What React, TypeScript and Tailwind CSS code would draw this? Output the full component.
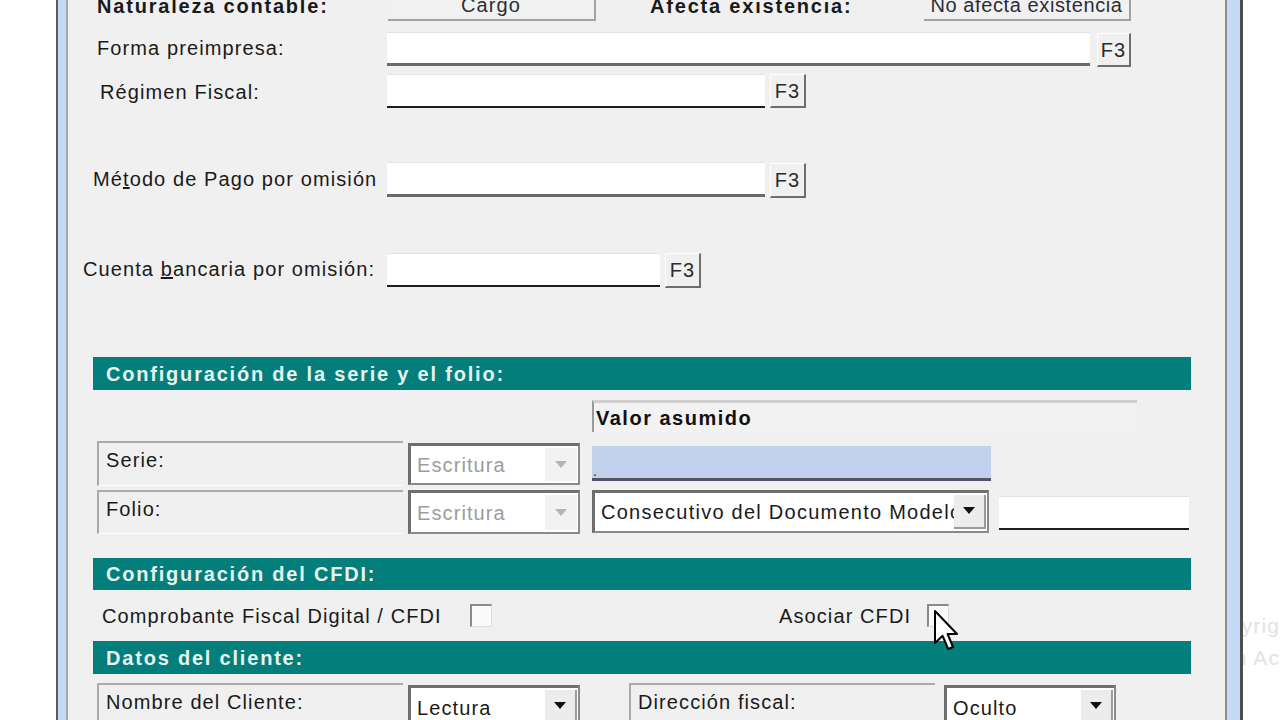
import React from 'react';

// Raised "F3" lookup button next to a text field
function F3Button({ className = '' }: { className?: string }) {
  return (
    <div
      className={`flex items-center justify-center bg-[#f0f0f0] border-t border-l border-white border-r-2 border-b-2 border-r-[#6e6e6e] border-b-[#6e6e6e] text-[20px] text-[#2b2b2b] ${className}`}
    >
      F3
    </div>
  );
}

function TextField({ className = '', dark = false }: { className?: string; dark?: boolean }) {
  return (
    <div
      className={`bg-white border-t border-t-[#e4e4e4] ${dark ? 'border-b-2 border-b-[#1e1e1e]' : 'border-b-[3px] border-b-[#6a6a6a]'} ${className}`}
    />
  );
}

function Arrow({ color }: { color: string }) {
  return (
    <svg width="12" height="8" viewBox="0 0 12 8">
      <path d="M0 0 H12 L6 7 Z" fill={color} />
    </svg>
  );
}

// Combo box; disabled ones show grey text and a pale arrow
function Combo({
  value,
  disabled = false,
  className = '',
}: {
  value: string;
  disabled?: boolean;
  className?: string;
}) {
  return (
    <div
      className={`flex items-stretch bg-white border-2 border-[#8a8a8a] border-t-[3px] border-l-[3px] border-t-[#6f6f6f] border-l-[#6f6f6f] ${className}`}
    >
      <span
        className={`flex-1 flex items-center pl-[6px] overflow-hidden whitespace-nowrap ${disabled ? 'text-[#9c9c9c]' : 'text-[#1a1a1a]'}`}
      >
        {value}
      </span>
      <span
        className={`w-[32px] shrink-0 my-[2px] mr-[1px] flex items-center justify-center ${disabled ? 'bg-[#f2f2f2]' : 'bg-[#ececec] border-r-2 border-b-2 border-r-[#9a9a9a] border-b-[#9a9a9a]'}`}
      >
        <Arrow color={disabled ? '#b5b5b5' : '#111'} />
      </span>
    </div>
  );
}

function LabelBox({ text, className = '' }: { text: string; className?: string }) {
  return (
    <div
      className={`bg-[#f0f0f0] border-t-2 border-l-2 border-t-[#ababab] border-l-[#ababab] border-b border-b-white pl-[7px] pt-[2px] text-[#1a1a1a] ${className}`}
    >
      {text}
    </div>
  );
}

function Header({ title, className = '' }: { title: string; className?: string }) {
  return (
    <div
      className={`ml-[25px] w-[1098px] bg-[#037e7a] flex items-center pl-[13px] font-bold tracking-[1.8px] text-[#e6f2f0] ${className}`}
    >
      {title}
    </div>
  );
}

function CheckBox() {
  return (
    <div className="w-[22px] h-[23px] bg-[#fafafa] border-t-2 border-l-2 border-t-[#8a8a8a] border-l-[#8a8a8a] border-r border-b border-r-[#dcdcdc] border-b-[#dcdcdc]" />
  );
}

export default function App() {
  return (
    <div className="flex w-[1280px] h-[720px] overflow-hidden bg-white font-['Liberation_Sans',Arial,sans-serif] text-[20px] tracking-[1.1px] text-[#1a1a1a]">
      {/* dialog window frame */}
      <div className="ml-[56px] flex h-full">
        <div className="w-[2px] bg-[#5b5b5b]" />
        <div className="w-[8px] bg-[#c3daf5]" />
        <div className="w-[2px] bg-[#a7a7a7]" />

        <div className="relative w-[1157px] h-full bg-[#f0f0f0] flex flex-col [&>*]:shrink-0">
          {/* Naturaleza contable / Afecta existencia */}
          <div className="-mt-[13px] h-[34px] flex items-center">
            <span className="w-[320px] pl-[29px] font-bold tracking-[1.8px] mt-[4px]">Naturaleza contable:</span>
            <div className="w-[208px] h-full flex items-center justify-center pt-[3px] bg-[#f1f1f1] border-r-2 border-b-2 border-r-[#a2a2a2] border-b-[#a2a2a2] text-[#2c2c38]">
              Cargo
            </div>
            <span className="ml-[54px] w-[274px] font-bold tracking-[1.8px] mt-[4px]">Afecta existencia:</span>
            <div className="w-[207px] h-full flex items-center justify-center pt-[3px] bg-[#f1f1f1] border-r-2 border-b-2 border-r-[#a2a2a2] border-b-[#a2a2a2] text-[#2c2c38] whitespace-nowrap tracking-[0.6px]">
              No afecta existencia
            </div>
          </div>

          {/* Forma preimpresa */}
          <div className="mt-[11px] h-[35px] flex items-start">
            <span className="w-[319px] pl-[29px] mt-[1px]">Forma preimpresa:</span>
            <TextField className="w-[703px] h-[34px]" />
            <F3Button className="ml-[7px] w-[34px] h-[34px] mt-[1px]" />
          </div>

          {/* Régimen Fiscal */}
          <div className="mt-[7px] h-[34px] flex items-start">
            <span className="w-[319px] pl-[32px] mt-[3px]">Régimen Fiscal:</span>
            <TextField dark className="w-[378px] h-[34px]" />
            <F3Button className="ml-[5px] w-[36px] h-[34px]" />
          </div>

          {/* Método de Pago */}
          <div className="mt-[54px] h-[36px] flex items-start">
            <span className="w-[319px] pl-[25px] mt-[2px]">
              Mé<u>t</u>odo de Pago por omisión
            </span>
            <TextField className="w-[378px] h-[35px]" />
            <F3Button className="ml-[5px] w-[36px] h-[35px] mt-[1px]" />
          </div>

          {/* Cuenta bancaria */}
          <div className="mt-[55px] h-[35px] flex items-start">
            <span className="w-[319px] pl-[15px] mt-[1px]">
              Cuenta <u>b</u>ancaria por omisión:
            </span>
            <TextField dark className="w-[273px] h-[34px]" />
            <F3Button className="ml-[5px] w-[36px] h-[35px]" />
          </div>

          <Header title="Configuración de la serie y el folio:" className="mt-[69px] h-[33px]" />

          {/* column caption */}
          <div className="mt-[10px] ml-[524px] w-[545px] h-[32px] bg-[#f2f2f2] border-t-[3px] border-t-[#cfcfcf] border-l-2 border-l-[#9a9a9a] flex items-center pl-[2px] font-bold tracking-[1.5px] text-[#111]">
            Valor asumido
          </div>

          {/* Serie */}
          <div className="mt-[9px] h-[45px] flex items-start">
            <LabelBox text="Serie:" className="ml-[29px] w-[306px] h-[45px]" />
            <Combo value="Escritura" disabled className="ml-[5px] w-[172px] h-[42px] mt-[2px]" />
            <div className="ml-[12px] mt-[5px] w-[399px] h-[35px] bg-[#c1d1ec] border-b-[3px] border-b-[#4f5563] flex items-end pl-[1px] text-[14px] leading-none">
              .
            </div>
          </div>

          {/* Folio */}
          <div className="mt-[4px] h-[44px] flex items-start">
            <LabelBox text="Folio:" className="ml-[29px] w-[306px] h-[44px]" />
            <Combo value="Escritura" disabled className="ml-[5px] w-[172px] h-[44px]" />
            <Combo value="Consecutivo del Documento Modelo" className="ml-[12px] w-[397px] h-[43px] tracking-[1.25px]" />
            <TextField dark className="ml-[10px] mt-[6px] w-[190px] h-[34px]" />
          </div>

          <Header title="Configuración del CFDI:" className="mt-[24px] h-[32px]" />

          {/* CFDI options */}
          <div className="h-[51px] flex items-center">
            <span className="ml-[34px] w-[368px] whitespace-nowrap">Comprobante Fiscal Digital / CFDI</span>
            <CheckBox />
            <span className="ml-[287px] w-[148px]">Asociar CFDI</span>
            <CheckBox />
          </div>

          <Header title="Datos del cliente:" className="h-[33px]" />

          {/* Datos del cliente */}
          <div className="mt-[9px] h-[45px] flex items-start">
            <LabelBox text="Nombre del Cliente:" className="ml-[29px] w-[306px] h-[45px]" />
            <Combo value="Lectura" className="ml-[5px] w-[172px] h-[42px] mt-[2px] [&>span:first-child]:pt-[3px]" />
            <LabelBox text="Dirección fiscal:" className="ml-[49px] w-[306px] h-[45px]" />
            <Combo value="Oculto" className="ml-[9px] w-[172px] h-[42px] mt-[2px] [&>span:first-child]:pt-[3px]" />
          </div>

          {/* mouse pointer */}
          <svg
            className="absolute left-[865px] top-[609px]"
            width="26"
            height="44"
            viewBox="0 0 13 22"
          >
            <path
              d="M1 1 L1 17 L4.8 13.4 L7.6 20 L10 19 L7.3 12.5 L12 12.5 Z"
              fill="#fff"
              stroke="#000"
              strokeWidth="1"
              strokeLinejoin="round"
            />
          </svg>
        </div>

        <div className="w-[2px] bg-[#8c8c8c]" />
        <div className="w-[13px] bg-[#c3daf5]" />
        <div className="w-[3px] bg-[#4e4e4e]" />
      </div>

      {/* faint system watermark, clipped by the screen edge */}
      <div className="flex-1 overflow-hidden flex flex-col items-end pt-[610px] text-[21px] leading-[32px] text-[#e2e2e2] whitespace-nowrap">
        <span>Copyrig</span>
        <span>Edición Ac</span>
      </div>
    </div>
  );
}
